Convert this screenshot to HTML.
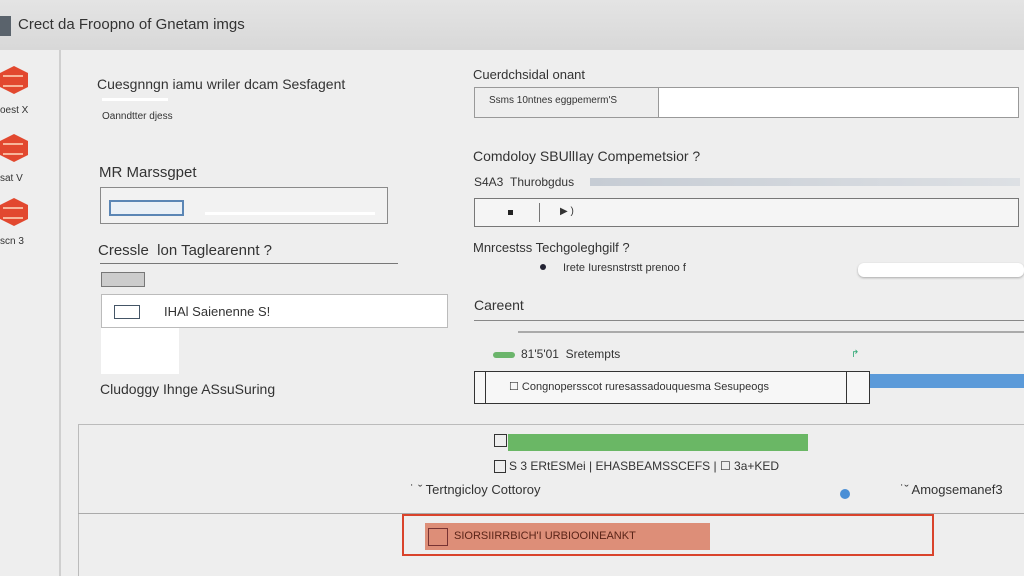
<!DOCTYPE html>
<html><head><meta charset="utf-8"><style>
body{margin:0;width:1024px;height:576px;overflow:hidden;background:#eeeeee;font-family:"Liberation Sans",sans-serif;color:#333;position:relative}
.a{position:absolute}
.t{position:absolute;white-space:nowrap;font-size:13px;color:#333}
.hex{position:absolute;width:28px;height:28px;background:#e2482f;clip-path:polygon(50% 0,100% 25%,100% 75%,50% 100%,0 75%,0 25%)}
.hex:after{content:"";position:absolute;left:3px;top:9px;width:20px;height:8px;border-top:2px solid #f7b59a;border-bottom:2px solid #f7b59a}
</style></head><body>
<div class="a" style="left:0;top:0;width:1024px;height:50px;background:linear-gradient(#e4e4e4,#d8d8d8)"></div>
<div class="a" style="left:0;top:16px;width:11px;height:20px;background:#5a636c"></div>
<div class="t" style="left:18px;top:16px;font-size:15px;color:#333">Crect da Froopno of Gnetam imgs</div>
<div class="a" style="left:59px;top:50px;width:2px;height:526px;background:#cfcfcf"></div>
<div class="hex" style="left:0;top:66px"></div><div class="t" style="left:0;top:105px;font-size:10px">oest X</div>
<div class="hex" style="left:0;top:134px"></div><div class="t" style="left:0;top:173px;font-size:10px">sat V</div>
<div class="hex" style="left:0;top:198px"></div><div class="t" style="left:0;top:236px;font-size:10px">scn 3</div>

<div class="t" style="left:97px;top:76px;font-size:14px">Cuesgnngn iamu wriler dcam Sesfagent</div>
<div class="a" style="left:102px;top:98px;width:66px;height:3px;background:#fff"></div>
<div class="t" style="left:102px;top:111px;font-size:10px">Oanndtter djess</div>
<div class="t" style="left:99px;top:164px;font-size:15px">MR Marssgpet</div>
<div class="a" style="left:100px;top:187px;width:288px;height:37px;border:1px solid #8a8a8a;background:#f2f2f2;box-sizing:border-box"></div>
<div class="a" style="left:109px;top:200px;width:75px;height:16px;border:2px solid #5b86b5;background:#eaf0f6;box-sizing:border-box"></div>
<div class="a" style="left:205px;top:212px;width:170px;height:3px;background:#fff"></div>
<div class="t" style="left:98px;top:242px;font-size:15px">Cressle &nbsp;lon Taglearennt ?</div>
<div class="a" style="left:100px;top:263px;width:298px;height:1px;background:#777"></div>
<div class="a" style="left:101px;top:272px;width:44px;height:15px;border:1px solid #777;background:#ccc;box-sizing:border-box"></div>
<div class="a" style="left:101px;top:294px;width:347px;height:34px;background:#fff;border:1px solid #bbb;box-sizing:border-box"></div>
<div class="a" style="left:101px;top:328px;width:78px;height:46px;background:#fff"></div>
<div class="a" style="left:114px;top:305px;width:26px;height:14px;border:1px solid #456;box-sizing:border-box"></div>
<div class="t" style="left:164px;top:304px;font-size:13px">IHAl Saienenne S!</div>
<div class="t" style="left:100px;top:381px;font-size:14px">Cludoggy Ihnge ASsuSuring</div>

<div class="t" style="left:473px;top:67px;font-size:13px">Cuerdchsidal onant</div>
<div class="a" style="left:474px;top:87px;width:545px;height:31px;border:1px solid #999;background:#fff;box-sizing:border-box"></div>
<div class="a" style="left:475px;top:88px;width:183px;height:29px;background:#eee;border-right:1px solid #999"></div>
<div class="t" style="left:489px;top:95px;font-size:10px">Ssms 10ntnes eggpemerm'S</div>
<div class="t" style="left:473px;top:148px;font-size:14px">Comdoloy SBUllIay Compemetsior ?</div>
<div class="t" style="left:474px;top:175px;font-size:12px">S4A3 &nbsp;Thurobgdus</div>
<div class="a" style="left:590px;top:178px;width:430px;height:8px;background:linear-gradient(90deg,#c6ccd4,#dde0e4)"></div>
<div class="a" style="left:474px;top:198px;width:545px;height:29px;border:1px solid #777;background:#f5f5f5;box-sizing:border-box"></div>
<div class="a" style="left:508px;top:210px;width:5px;height:5px;background:#222"></div>
<div class="a" style="left:539px;top:203px;width:1px;height:19px;background:#777"></div>
<div class="t" style="left:560px;top:206px;font-size:10px">▶ )</div>
<div class="t" style="left:473px;top:240px;font-size:13px">Mnrcestss Techgoleghgilf ?</div>
<div class="a" style="left:540px;top:264px;width:6px;height:6px;border-radius:50%;background:#223"></div>
<div class="t" style="left:563px;top:262px;font-size:11px">Irete Iuresnstrstt prenoo f</div>
<div class="a" style="left:858px;top:263px;width:166px;height:14px;background:#fff;border-radius:6px;box-shadow:0 1px 2px #aaa"></div>
<div class="t" style="left:474px;top:297px;font-size:14px">Careent</div>
<div class="a" style="left:474px;top:320px;width:550px;height:1px;background:#888"></div>
<div class="a" style="left:518px;top:331px;width:506px;height:2px;background:#aaa"></div>
<div class="a" style="left:493px;top:352px;width:22px;height:6px;border-radius:3px;background:#6bb56b"></div>
<div class="t" style="left:521px;top:347px;font-size:12px">81'5'01 &nbsp;Sretempts</div>
<div class="t" style="left:851px;top:349px;font-size:10px;color:#3a7">↱</div>
<div class="a" style="left:474px;top:371px;width:396px;height:33px;border:1px solid #333;background:#f7f7f7;box-sizing:border-box"></div>
<div class="a" style="left:485px;top:372px;width:1px;height:31px;background:#333"></div>
<div class="a" style="left:846px;top:372px;width:1px;height:31px;background:#333"></div>
<div class="t" style="left:509px;top:380px;font-size:11px">☐ Congnopersscot ruresassadouquesma Sesupeogs</div>
<div class="a" style="left:870px;top:374px;width:154px;height:14px;background:#5b9ad9"></div>

<div class="a" style="left:78px;top:424px;width:946px;height:1px;background:#bbb"></div>
<div class="a" style="left:78px;top:424px;width:1px;height:152px;background:#bbb"></div>
<div class="a" style="left:494px;top:434px;width:13px;height:13px;border:1px solid #333;box-sizing:border-box"></div>
<div class="a" style="left:508px;top:434px;width:300px;height:17px;background:#6ab765"></div>
<div class="a" style="left:494px;top:460px;width:12px;height:13px;border:1px solid #333;box-sizing:border-box"></div>
<div class="t" style="left:509px;top:459px;font-size:12px">S 3 ERtESMei | EHASBEAMSSCEFS | ☐ 3a+KED</div>
<div class="t" style="left:410px;top:482px;font-size:13px">˙ ˇ Tertngicloy Cottoroy</div>
<div class="t" style="left:900px;top:482px;font-size:13px">˙ˇ Amogsemanef3</div>
<div class="a" style="left:840px;top:489px;width:10px;height:10px;border-radius:50%;background:#4a8fd6"></div>
<div class="a" style="left:78px;top:513px;width:946px;height:1px;background:#aaa"></div>
<div class="a" style="left:402px;top:514px;width:532px;height:42px;border:2px solid #d9432b;box-sizing:border-box"></div>
<div class="a" style="left:425px;top:523px;width:285px;height:27px;background:#dd8e78"></div>
<div class="a" style="left:428px;top:528px;width:20px;height:18px;border:1px solid #733;box-sizing:border-box"></div>
<div class="t" style="left:454px;top:530px;font-size:11px;color:#5a2418">SIORSIIRRBICH'I URBIOOINEANKT</div>
</body></html>
